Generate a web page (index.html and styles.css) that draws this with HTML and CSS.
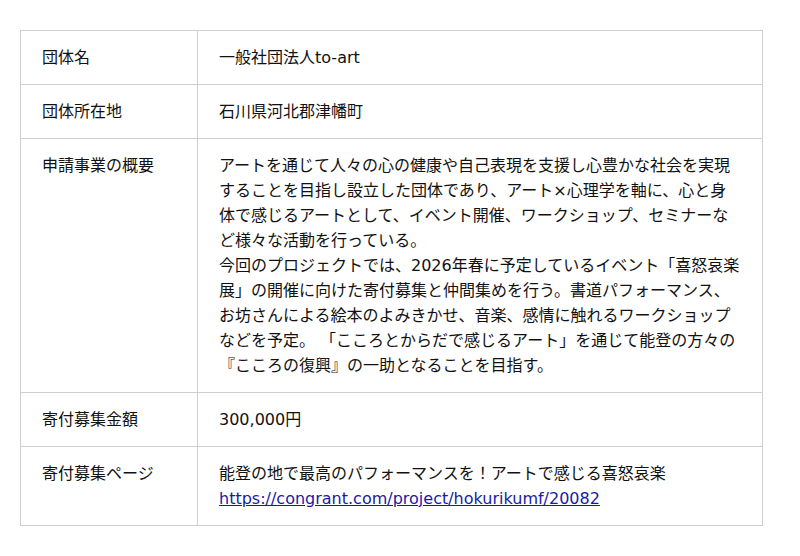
FILE: index.html
```html
<!DOCTYPE html>
<html lang="ja">
<head>
<meta charset="utf-8">
<link rel="stylesheet" href="styles.css">
</head>
<body>
<div class="wrap">
<table class="info">
<colgroup><col class="c1"><col class="c2"></colgroup>
<tbody>
<tr><th>団体名</th><td>一般社団法人to-art</td></tr>
<tr><th>団体所在地</th><td>石川県河北郡津幡町</td></tr>
<tr><th>申請事業の概要</th><td>アートを通じて人々の心の健康や自己表現を支援し心豊かな社会を実現することを目指し設立した団体であり、アート×心理学を軸に、心と身体で感じるアートとして、イベント開催、ワークショップ、セミナーなど様々な活動を行っている。<br>今回のプロジェクトでは、2026年春に予定しているイベント「喜怒哀楽展」の開催に向けた寄付募集と仲間集めを行う。書道パフォーマンス、お坊さんによる絵本のよみきかせ、音楽、感情に触れるワークショップなどを予定。 「こころとからだで感じるアート」を通じて能登の方々の『こころの復興』の一助となることを目指す。</td></tr>
<tr><th>寄付募集金額</th><td>300,000円</td></tr>
<tr><th>寄付募集ページ</th><td>能登の地で最高のパフォーマンスを！アートで感じる喜怒哀楽<br><a href="#">https://congrant.com/project/hokurikumf/20082</a></td></tr>
</tbody>
</table>
</div>
</body>
</html>
```
FILE: styles.css
```css
html, body {
  margin: 0;
  padding: 0;
  background: #fff;
}
.wrap {
  padding: 30px 38px 0 20px;
}
.info {
  border-collapse: collapse;
  table-layout: fixed;
  width: 742px;
  font-family: "DejaVu Sans", "Noto Sans CJK JP", sans-serif;
  font-size: 16px;
  line-height: 25px;
  color: #111;
}
.info .c1 { width: 177px; }
.info .c2 { width: 565px; }
.info th,
.info td {
  border: 1px solid #cfcfcf;
  padding: 14px 21px;
  text-align: left;
  vertical-align: top;
  font-weight: normal;
}
.info a {
  color: #1a1aa6;
  text-decoration: underline;
}
```
